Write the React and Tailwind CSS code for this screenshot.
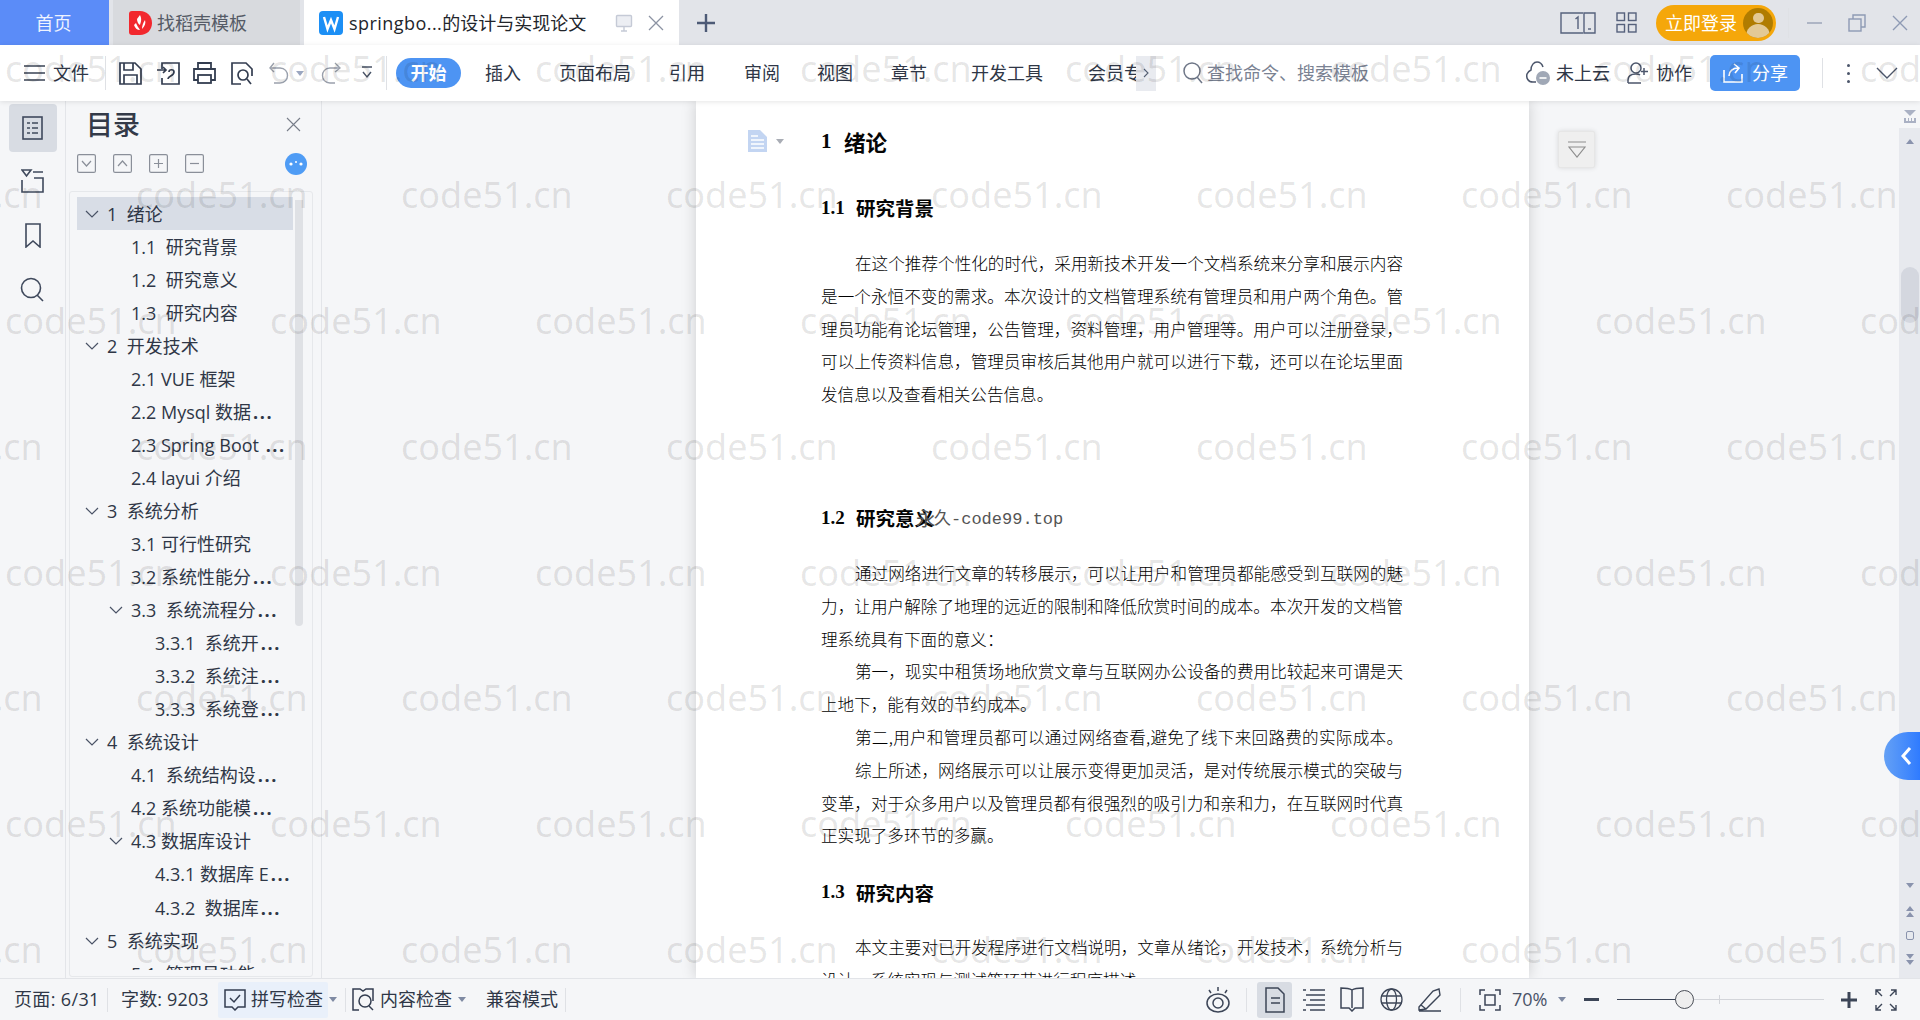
import React from "react";

const S = ({ w, h, vb, className = "", c = "#333d50", sw = 1.6, children }) => (
  <svg width={w} height={h} viewBox={vb || `0 0 ${w} ${h}`} fill="none" stroke={c} strokeWidth={sw} className={`shrink-0 ${className}`}>
    {children}
  </svg>
);

const Caret = ({ c = "#7f8aa3", className = "" }) => (
  <svg width="8" height="5" viewBox="0 0 8 5" className={`shrink-0 ${className}`}><path d="M0 0h8L4 5z" fill={c} /></svg>
);

const Sep = ({ className = "" }) => <div className={`w-px shrink-0 bg-[#dfe1e5] ${className}`} />;

const tree = [
  [0, "1  绪论", true],
  [1, "1.1  研究背景"],
  [1, "1.2  研究意义"],
  [1, "1.3  研究内容"],
  [0, "2  开发技术", true],
  [1, "2.1 VUE 框架"],
  [1, "2.2 Mysql 数据..."],
  [1, "2.3 Spring Boot ..."],
  [1, "2.4 layui 介绍"],
  [0, "3  系统分析", true],
  [1, "3.1 可行性研究"],
  [1, "3.2 系统性能分..."],
  [1, "3.3  系统流程分...", true],
  [2, "3.3.1  系统开..."],
  [2, "3.3.2  系统注..."],
  [2, "3.3.3  系统登..."],
  [0, "4  系统设计", true],
  [1, "4.1  系统结构设..."],
  [1, "4.2 系统功能模..."],
  [1, "4.3 数据库设计", true],
  [2, "4.3.1 数据库 E..."],
  [2, "4.3.2  数据库..."],
  [0, "5  系统实现", true],
  [1, "5.1  管理员功能"],
];
const indent = ["pl-[30px]", "pl-[54px]", "pl-[78px]"];

const Line = ({ t, first, last, narrow }) => (
  <div className={`h-[32.8px] leading-[32.8px] w-[582px] whitespace-nowrap ${first ? "pl-[34px]" : ""} ${last ? "" : "[text-align-last:justify]"}`}>{narrow ? t : t.replace(/,/g, "\uFF0C").replace(/:/g, "\uFF1A")}</div>
);

const H2 = ({ n, t, className = "", children }) => (
  <div className={`h-[50px] flex items-center font-bold text-[19.5px] text-[#050505] ${className}`}>
    <span className="w-[35px] font-['Liberation_Serif'] text-[19px]">{n}</span>
    <span className="relative">{t}{children}</span>
  </div>
);

const wmRow = ["", "", "", "", "", "", "", ""];

const Box = ({ children }) => (
  <svg width="19" height="19" viewBox="0 0 19 19" fill="none" stroke="#8a8f99" strokeWidth="1.2" className="shrink-0">
    <rect x="0.6" y="0.6" width="17.8" height="17.8" rx="1.5" />
    {children}
  </svg>
);

const TreeLabel = ({ t }) => {
  const has = t.endsWith("...");
  return (
    <span>
      {has ? t.slice(0, -3) : t}
      {has && <span className="font-bold tracking-[1.6px] pl-[2px]">...</span>}
    </span>
  );
};

export default function App() {
  return (
    <div className="relative w-[1920px] h-[1020px] overflow-hidden flex flex-col bg-[#f5f6f8] text-[18px] text-[#2f3747] font-['Open_Sans','Noto_Sans_CJK_SC',sans-serif]">
      {/* tab bar */}
      <div className="h-[45px] shrink-0 flex items-stretch bg-[#e2e4e9]">
        <div className="w-[109px] bg-[#5b8cf8] text-[#eef3ff] flex items-center justify-center pt-[2px] pr-[2px]">首页</div>
        <div className="ml-[4px] w-[187px] bg-[#d8dade] flex items-center pl-[16px] text-[#555b66]">
          <svg width="23" height="24" viewBox="0 0 23 24" className="shrink-0">
            <path d="M0 3a3 3 0 013-3h8c7 0 12 5 12 12s-5 12-12 12H3a3 3 0 01-3-3z" fill="#f2282e" />
            <path d="M11 4c2 4 1 7 0 10-2-1-3-4-3-6zM7 12c1 3 3 5 4 7-3 0-5-2-6-5zM16 9c1 3 0 6-3 9 0-3 1-6 3-9z" fill="#fff" />
          </svg>
          <span className="ml-[5px] pt-[2px]">找稻壳模板</span>
        </div>
        <div className="ml-[4px] w-[375px] bg-white flex items-center pl-[15px] text-[#22252b]">
          <svg width="24" height="24" viewBox="0 0 24 24" className="shrink-0">
            <rect width="24" height="24" rx="4" fill="#1c8ff5" />
            <path d="M5 6l3.5 12L12 9l3.5 9L19 6" fill="none" stroke="#fff" strokeWidth="2.4" />
          </svg>
          <span className="ml-[6px] w-[238px] whitespace-nowrap pt-[2px]"><span className="tracking-[0.45px]">springbo...</span>的设计与实现论文</span>
          <S w={18} h={18} c="#c5cad6" sw={1.4} className="ml-[28px]">
            <rect x="1.5" y="1.5" width="15" height="11" rx="1" fill="#eceef3" /><path d="M9 13v4M6 17h6" />
          </S>
          <S w={16} h={16} c="#8c93a3" sw={1.3} className="ml-[15px]"><path d="M1 1l14 14M15 1L1 15" /></S>
        </div>
        <div className="ml-[18px] flex items-center">
          <S w={18} h={18} c="#4d5a76" sw={2.4}><path d="M9 0v18M0 9h18" /></S>
        </div>
        <div className="ml-auto flex items-center pr-[12px]">
          <S w={36} h={22} c="#56617c" sw={1.4}>
            <path d="M23 1H1v20h22" /><path d="M24 1h11v20H24z" /><path d="M28 17h3" />
            <path d="M18 17V5l-2.5 2" />
          </S>
          <S w={21} h={21} c="#56617c" sw={1.4} className="ml-[20px]">
            <rect x="1" y="1" width="7.5" height="7.5" /><rect x="12.5" y="1" width="7.5" height="7.5" /><rect x="1" y="12.5" width="7.5" height="7.5" /><rect x="12.5" y="12.5" width="7.5" height="7.5" />
          </S>
          <div className="ml-[19px] w-[120px] h-[36px] rounded-full bg-[#f5a70a] flex items-center pl-[9px] text-white">
            <span className="w-[72px] whitespace-nowrap pt-[1px]">立即登录</span>
            <div className="ml-[6px] w-[30px] h-[30px] rounded-full bg-[#b07c00] overflow-hidden flex flex-col items-center shrink-0">
              <div className="mt-[5px] w-[11px] h-[11px] rounded-full bg-[#e3c995]" />
              <div className="mt-[1px] w-[24px] h-[14px] rounded-t-full bg-[#e3c995]" />
            </div>
          </div>
          <Sep className="ml-[12px] h-[30px] bg-[#cfd1d6]" />
          <S w={15} h={15} c="#98a1b6" sw={1.4} className="ml-[18px]"><path d="M0 8h15" /></S>
          <S w={18} h={18} c="#8e9ab4" sw={1.4} className="ml-[26px]"><rect x="1" y="5" width="12" height="12" /><path d="M5 5V1h12v12h-4" /></S>
          <S w={16} h={16} c="#8e9ab4" sw={1.4} className="ml-[26px]"><path d="M1 1l14 14M15 1L1 15" /></S>
        </div>
      </div>

      {/* toolbar */}
      <div className="relative z-10 h-[56px] shrink-0 bg-white flex items-center shadow-[0_1px_5px_rgba(0,0,0,0.1)] whitespace-nowrap">
        <S w={21} h={16} c="#3a4354" sw={1.5} className="ml-[24px]"><path d="M0 1h21M0 8h21M0 15h21" /></S>
        <span className="ml-[8px] w-[36px]">文件</span>
        <Sep className="ml-[16px] h-[34px]" />
        <S w={23} h={23} sw={1.7} className="ml-[13px]"><path d="M1 1h15l6 6v15H1z" /><path d="M5 1v7h9V1M5 22v-9h13v9" /></S>
        <S w={23} h={23} sw={1.7} className="ml-[15px]"><path d="M5 7V1h17v21H5v-6" /><path d="M0 8h8M6 5l3 3-3 3" /><path d="M11 17c0-3 6-3 6-7 0-3-5-3-5 0" /></S>
        <S w={23} h={22} sw={1.8} className="ml-[13px]"><path d="M5 7V1h13v6M5 18H1V7h21v11h-4" /><rect x="5" y="13" width="13" height="8" /></S>
        <S w={22} h={23} sw={1.7} className="ml-[15px]"><path d="M10 22H1V1h14l6 6v7" /><circle cx="12" cy="13" r="5" /><path d="M16 17l4 5" /></S>
        <S w={20} h={22} c="#9aa0ac" sw={1.4} className="ml-[16px]"><path d="M5 1L1 6l4 4" /><path d="M1 6h10c10 0 10 15 0 15H5" /></S>
        <Caret c="#9aa6c0" className="ml-[7px]" />
        <S w={21} h={22} c="#9aa0ac" sw={1.4} className="ml-[16px]"><path d="M15 1l5 5-5 4" /><path d="M20 6H10C0 6 0 21 10 21h5" /></S>
        <S w={10} h={14} c="#4a5366" sw={1.4} className="ml-[21px]"><path d="M0 1h10M1 6l4 5 4-5" /></S>
        <Sep className="ml-[14px] h-[34px]" />
        <div className="ml-[9px] w-[65px] h-[30px] rounded-full bg-[#4d94f3] text-white font-bold flex items-center justify-center">开始</div>
        <span className="ml-[24px] w-[36px]">插入</span>
        <span className="ml-[38px] w-[72px]">页面布局</span>
        <span className="ml-[38px] w-[36px]">引用</span>
        <span className="ml-[39px] w-[36px]">审阅</span>
        <span className="ml-[37px] w-[36px]">视图</span>
        <span className="ml-[38px] w-[36px]">章节</span>
        <span className="ml-[44px] w-[72px]">开发工具</span>
        <span className="ml-[45px] w-[48px] overflow-hidden">会员专</span>
        <div className="w-[20px] h-[35px] bg-[#e9ebf0] flex items-center justify-center">
          <S w={6} h={10} c="#555f72" sw={1.1}><path d="M1 1l4 4-4 4" /></S>
        </div>
        <S w={20} h={22} c="#6e7687" sw={1.5} className="ml-[27px]"><circle cx="9" cy="9" r="8" /><path d="M14 15l5 6" /></S>
        <span className="ml-[4px] w-[162px] text-[#7a8292]">查找命令、搜索模板</span>
        <div className="ml-auto pr-[22px] flex items-center">
          <svg width="24" height="24" viewBox="0 0 24 24" fill="none" className="shrink-0">
            <path d="M10 21H7C2 21 0 17 1 13c1-2 2-3 4-4 0-5 3-8 6-8s5 2 6 5" stroke="#4c566b" strokeWidth="1.5" />
            <circle cx="17" cy="17" r="7" fill="#a0a8b6" /><path d="M13.5 17h7" stroke="#fff" strokeWidth="1.6" />
          </svg>
          <span className="ml-[6px] w-[54px]">未上云</span>
          <S w={21} h={22} c="#4c566b" sw={1.5} className="ml-[17px]"><circle cx="9" cy="6" r="5" /><path d="M1 21v-3c0-4 3-6 8-6 2 0 3 0 4 1M1 21h13M17 6v7M14 9.5h7" /></S>
          <span className="ml-[8px] w-[36px]">协作</span>
          <div className="ml-[18px] w-[90px] h-[36px] rounded-[5px] bg-[#4d94f3] text-white flex items-center pl-[13px]">
            <S w={20} h={20} c="#fff" sw={1.6}><path d="M1 7v12h18v-8" /><path d="M6 13c0-5 4-8 9-8M11 1l5 4-4 5" /></S>
            <span className="ml-[9px]">分享</span>
          </div>
          <Sep className="ml-[22px] h-[30px]" />
          <div className="ml-[24px] flex flex-col gap-[5px]">
            <div className="w-[3px] h-[3px] rounded-full bg-[#4c566b]" />
            <div className="w-[3px] h-[3px] rounded-full bg-[#4c566b]" />
            <div className="w-[3px] h-[3px] rounded-full bg-[#4c566b]" />
          </div>
          <S w={22} h={12} c="#4c566b" sw={1.4} className="ml-[26px]"><path d="M1 1l10 10L21 1" /></S>
        </div>
      </div>

      {/* main */}
      <div className="flex-1 min-h-0 flex">
        {/* rail */}
        <div className="w-[65px] shrink-0 flex flex-col items-center">
          <div className="mt-[3px] w-[48px] h-[48px] rounded-[4px] bg-[#d8dce3] flex items-center justify-center">
            <S w={21} h={24} c="#3f495c" sw={1.6}><rect x="1" y="1" width="19" height="22" /><path d="M5 7h3M10 7h6M5 12h3M10 12h6M5 17h3M10 17h6" strokeWidth="1.3" /></S>
          </div>
          <S w={23} h={24} c="#3f495c" sw={1.6} className="mt-[17px]"><path d="M1 1h9L5.5 7zM12 3h10M1 11v12h21V9H13" /></S>
          <S w={16} h={25} c="#3f495c" sw={1.6} className="mt-[30px]"><path d="M1 1h14v23l-7-6-7 6z" /></S>
          <S w={25} h={25} c="#3f495c" sw={1.6} className="mt-[29px]"><circle cx="11" cy="11" r="9.5" /><path d="M17 18l6 6" /></S>
        </div>
        {/* outline */}
        <div className="relative w-[257px] shrink-0 border-l border-r border-[#e3e5e9] flex flex-col">
          <div className="h-[46px] shrink-0 flex items-center pl-[20px] pr-[20px]">
            <span className="text-[27px] font-medium leading-none text-[#333a48]">目录</span>
            <S w={15} h={15} c="#777d89" sw={1.1} className="ml-auto"><path d="M1 1l13 13M14 1L1 14" /></S>
          </div>
          <div className="mt-[7px] h-[19px] flex items-center pl-[11px]">
            <Box><path d="M5 7l4.5 5L14 7" /></Box>
            <div className="ml-[17px]"><Box><path d="M5 12l4.5-5 4.5 5" /></Box></div>
            <div className="ml-[17px]"><Box><path d="M5 9.5h9M9.5 5v9" /></Box></div>
            <div className="ml-[17px]"><Box><path d="M5 9.5h9" /></Box></div>
            <div className="ml-[81px] w-[22px] h-[22px] rounded-full bg-[#4f9cf5] flex items-center justify-center">
              <svg width="16" height="8" viewBox="0 0 16 8" fill="#fff"><circle cx="3" cy="4" r="1.6" /><circle cx="8" cy="2" r="1" /><circle cx="13" cy="4" r="1.6" /></svg>
            </div>
          </div>
          <div className="relative ml-[3px] mt-[18px] w-[244px] h-[786px] border border-[#e6e8eb] rounded-[3px]">
            <div className="mt-[5px] h-[773px] overflow-hidden">
              {tree.map(([lv, t, open], i) => (
                <div key={i} className={`ml-[7px] w-[216px] h-[33.05px] flex items-center whitespace-pre leading-none ${indent[lv]} ${i === 0 ? "bg-[#d8dde6]" : ""}`}>
                  {open && (
                    <S w={14} h={8} c="#4a5366" sw={1.2} className="-ml-[22px] mr-[8px]"><path d="M1 1l6 6 6-6" /></S>
                  )}
                  <TreeLabel t={t} />
                </div>
              ))}
            </div>
            <div className="absolute left-[225px] top-[8px] w-[8px] h-[426px] rounded-b-full bg-[#dfe1e5]" />
          </div>
        </div>
        {/* canvas */}
        <div className="relative flex-1 min-w-0 overflow-hidden">
          <div className="ml-[374px] w-[833px] h-full bg-white shadow-[0_0_14px_rgba(0,0,0,0.17)] pl-[125px] text-[16.6px] text-black font-['Noto_Sans_CJK_SC',sans-serif] font-light overflow-hidden">
            <div className="h-[82px] flex items-center font-bold text-[21.5px] text-[#050505]">
              <span className="w-[23px] font-['Liberation_Serif'] text-[21px]">1</span>绪论
            </div>
            <H2 n="1.1" t="研究背景" />
            <div className="mt-[14px]">
              <Line first t="在这个推荐个性化的时代,采用新技术开发一个文档系统来分享和展示内容" />
              <Line t="是一个永恒不变的需求。本次设计的文档管理系统有管理员和用户两个角色。管" />
              <Line t="理员功能有论坛管理,公告管理,资料管理,用户管理等。用户可以注册登录," />
              <Line t="可以上传资料信息,管理员审核后其他用户就可以进行下载,还可以在论坛里面" />
              <Line last t="发信息以及查看相关公告信息。" />
            </div>
            <H2 n="1.2" t="研究意义" className="mt-[82px]">
              <span className="absolute left-[60px] top-0 text-[#555] font-normal">永</span>
              <span className="absolute left-full top-[1px] whitespace-nowrap font-normal text-[17px] text-[#555]">久<span className="font-['Liberation_Mono']">-code99.top</span></span>
            </H2>
            <div className="mt-[14px]">
              <Line first t="通过网络进行文章的转移展示,可以让用户和管理员都能感受到互联网的魅" />
              <Line t="力,让用户解除了地理的远近的限制和降低欣赏时间的成本。本次开发的文档管" />
              <Line last t="理系统具有下面的意义:" />
              <Line first t="第一,现实中租赁场地欣赏文章与互联网办公设备的费用比较起来可谓是天" />
              <Line last t="上地下,能有效的节约成本。" />
              <Line first narrow t="第二,用户和管理员都可以通过网络查看,避免了线下来回路费的实际成本。" />
              <Line first t="综上所述,网络展示可以让展示变得更加灵活,是对传统展示模式的突破与" />
              <Line t="变革,对于众多用户以及管理员都有很强烈的吸引力和亲和力,在互联网时代真" />
              <Line last t="正实现了多环节的多赢。" />
            </div>
            <H2 n="1.3" t="研究内容" className="mt-[15px]" />
            <div className="mt-[14px]">
              <Line first t="本文主要对已开发程序进行文档说明,文章从绪论,开发技术,系统分析与" />
              <Line last t="设计、系统实现与测试等环节进行程序描述。" />
            </div>
          </div>
          <div className="absolute left-[426px] top-[29px] flex items-center">
            <svg width="19" height="22" viewBox="0 0 19 22" className="shrink-0">
              <path d="M0 0h12l7 7v15H0z" fill="#c3d5f2" />
              <path d="M3 6h7M3 10h13M3 14h13M3 18h13" stroke="#fff" strokeWidth="1.5" />
            </svg>
            <Caret c="#a9adb5" className="ml-[9px]" />
          </div>
          <div className="absolute left-[1236px] top-[30px] w-[37px] h-[37px] bg-[#efefef] border border-[#e6e6e6] rounded-[2px] shadow-[0_0_5px_rgba(0,0,0,0.12)] flex items-center justify-center">
            <S w={18} h={18} c="#8d8d8d" sw={1.1}><path d="M0 1h18M1 6h16L9 16z" /></S>
          </div>
        </div>
        {/* scrollbar */}
        <div className="w-[21px] shrink-0 flex flex-col items-center">
          <svg width="14" height="14" viewBox="0 0 14 14" fill="#aab1c4" className="mt-[9px] shrink-0">
            <path d="M1 0h12L7 6z" /><path d="M1 8v5h12V8h-2v3H9V8H8v3H6V8H5v3H3V8z" />
          </svg>
          <div className="mt-[4px] w-full flex-1 bg-[#e7e9ee] flex flex-col items-center">
            <Caret c="#8a93ad" className="mt-[11px] rotate-180" />
            <div className="mt-[123px] w-[18px] h-[56px] rounded-full bg-[#d4d7df]" />
            <Caret c="#8a93ad" className="mt-auto mb-[18px]" />
            <svg width="8" height="11" viewBox="0 0 8 11" fill="#8a93ad" className="shrink-0"><path d="M4 0l4 5H0zM4 6l4 5H0z" /></svg>
            <div className="mt-[14px] w-[8px] h-[9px] border border-[#8a93ad] rounded-[2px]" />
            <svg width="8" height="11" viewBox="0 0 8 11" fill="#8a93ad" className="mt-[14px] mb-[13px] shrink-0"><path d="M0 0h8L4 5zM0 6h8l-4 5z" /></svg>
          </div>
        </div>
      </div>

      {/* status bar */}
      <div className="relative z-10 h-[42px] shrink-0 bg-[#f5f6f8] border-t border-[#e2e4e8] flex items-center whitespace-nowrap">
        <span className="ml-[14px] w-[84px] tracking-[0.35px]">页面: 6/31</span>
        <Sep className="ml-[9px] h-[24px]" />
        <span className="ml-[13px] w-[88px] tracking-[0.15px]">字数: 9203</span>
        <div className="ml-[9px] w-[110px] h-[36px] bg-[#e9f0fa] rounded-[2px] flex items-center pl-[6px]">
          <S w={22} h={22} sw={1.5}><path d="M1 1h20v17h-7l-3 3-3-3H1z" /><path d="M6 9l4 4 6-7" /></S>
          <span className="ml-[5px]">拼写检查</span>
        </div>
        <Caret className="ml-[1px]" />
        <Sep className="ml-[8px] h-[24px]" />
        <S w={22} h={23} sw={1.5} className="ml-[6px]"><path d="M7 22H1V1h7l3 2 3-2h7v12" /><circle cx="13" cy="13" r="6" /><path d="M17 18l4 4" /></S>
        <span className="ml-[6px] w-[72px]">内容检查</span>
        <Caret className="ml-[6px]" />
        <span className="ml-[20px] w-[72px]">兼容模式</span>
        <Sep className="ml-[7px] h-[24px]" />

        <S w={24} h={26} c="#3c4557" sw={1.5} className="ml-[640px]"><path d="M12 0v4M3 3l2 3M21 3l-2 3" /><ellipse cx="12" cy="16" rx="11" ry="9" /><circle cx="12" cy="16" r="5" /></S>
        <Sep className="ml-[16px] h-[24px]" />
        <div className="ml-[10px] w-[35px] h-[36px] rounded-[3px] bg-[#d8dce3] flex items-center justify-center">
          <S w={20} h={26} sw={1.5} c="#3c4557"><path d="M1 1h12l6 6v18H1z" /><path d="M6 11h9M6 16h9" /></S>
        </div>
        <S w={22} h={22} c="#3c4557" sw={1.4} className="ml-[11px]"><path d="M7 1h15M3 6h19M7 11h15M3 16h19M7 21h15" /><path d="M0 1h3M0 11h3M0 21h3" /></S>
        <S w={24} h={25} c="#3c4557" sw={1.5} className="ml-[15px]"><path d="M12 3C9 1 4 1 1 1v20h8l3 3 3-3h8V1c-3 0-8 0-11 2zM12 3v18" /></S>
        <S w={23} h={23} c="#3c4557" sw={1.3} className="ml-[16px]"><circle cx="11.5" cy="11.5" r="10.5" /><ellipse cx="11.5" cy="11.5" rx="5" ry="10.5" /><path d="M1 8h21M1 15h21" /></S>
        <S w={24} h={24} c="#3c4557" sw={1.4} className="ml-[15px]"><path d="M1 19L15 3l6-2 1 6-14 14-7 1zM1 23h22M3 17l5 4" /></S>
        <Sep className="ml-[18px] h-[24px]" />
        <S w={22} h={22} c="#3c4557" sw={1.5} className="ml-[18px]"><path d="M1 6V1h5M16 1h5v5M21 16v5h-5M6 21H1v-5" /><rect x="6" y="6" width="10" height="10" /></S>
        <span className="ml-[11px] w-[39px] text-[#4a5368]">70%</span>
        <Caret className="ml-[7px]" />
        <div className="ml-[18px] w-[15px] h-[3px] bg-[#3c4557]" />
        <div className="relative ml-[18px] w-[207px] h-[1px] bg-[#d3d5da]">
          <div className="h-[1px] w-[60px] bg-[#3c4557]" />
          <div className="absolute left-[58px] -top-[9px] w-[19px] h-[19px] rounded-full bg-[#eeeeee] border border-[#4b4f58]" />
          <div className="absolute left-[102px] -top-[4px] w-px h-[9px] bg-[#d3d5da]" />
        </div>
        <S w={16} h={16} c="#3c4557" sw={3} className="ml-[17px]"><path d="M8 0v16M0 8h16" /></S>
        <S w={22} h={22} c="#3c4557" sw={1.4} className="ml-[18px]"><path d="M1 6V1h5M1 1l6 6M21 6V1h-5M21 1l-6 6M1 16v5h5M1 21l6-6M21 16v5h-5M21 21l-6-6" /></S>
      </div>

      {/* watermark */}
      <div className="absolute z-20 left-0 right-0 top-[45px] bottom-[42px] overflow-hidden pointer-events-none select-none">
        <div className="-mt-[39px] text-[36px] text-black/10 font-['Noto_Sans','Open_Sans',sans-serif]">
          {wmRow.map((_, r) => (
            <div key={r} className={`h-[125.9px] flex items-center ${r % 2 === 0 ? "ml-[5px]" : "-ml-[129px]"}`}>
              {Array.from({ length: 9 }).map((_, c) => (
                <span key={c} className="w-[265px] shrink-0 whitespace-nowrap">code51.cn</span>
              ))}
            </div>
          ))}
        </div>
      </div>

      {/* side tab */}
      <div className="absolute z-30 right-0 top-[732px] w-[36px] h-[48px] rounded-l-[24px] bg-gradient-to-r from-[#64a0f5] to-[#2f7bff] flex items-center justify-center pl-[7px]">
        <S w={12} h={20} c="#fff" sw={3}><path d="M10 2L3 10l7 8" /></S>
      </div>
    </div>
  );
}
